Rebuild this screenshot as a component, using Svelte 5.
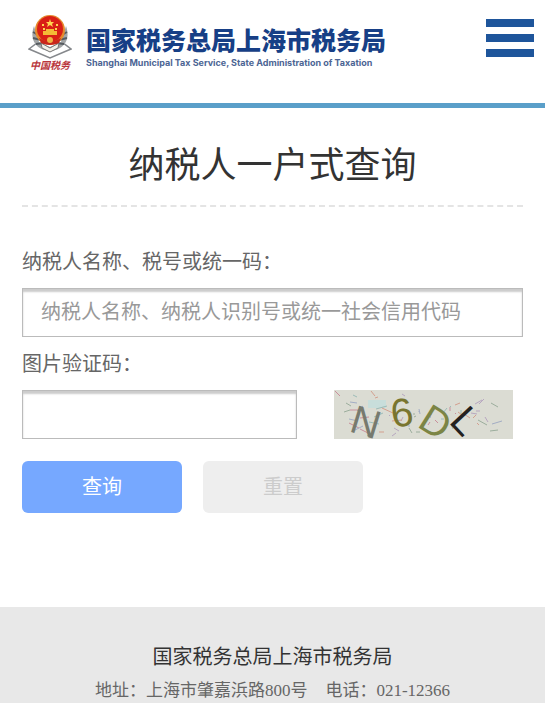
<script>
    let taxpayer = $state('');
    let code = $state('');

    const captcha = [
        { char: 'N', x: 14, y: 41, angle: 17, color: '#777a6e' },
        { char: '6', x: 59, y: 38, angle: -9, color: '#78752f' },
        { char: 'D', x: 82, y: 36, angle: 32, color: '#7c8545' },
        { char: 'L', x: 114, y: 32, angle: 47, color: '#24221f' }
    ];

    const colors = ['#c98f9b', '#a3adc4', '#9cae9d', '#b7a7c0', '#d3a08f', '#9cbcb8'];
    const noise = Array.from({ length: 60 }, (_, i) => {
        const x = 6 + (i * 67 + (i * i) % 23) % 160;
        const y = 6 + (i * 29 + (i * i) % 17) % 38;
        return {
            x,
            y,
            x2: x + ((i * 7) % 17) - 5,
            y2: y + ((i * 5) % 11) - 5,
            color: colors[i % colors.length]
        };
    });

    function reset() {
        taxpayer = '';
        code = '';
    }
</script>

<header>
    <a class="brand" href="/" aria-label="国家税务总局上海市税务局">
        <span class="emblem">
            <svg viewBox="0 0 44 44" width="44" height="44" aria-hidden="true">
                <path d="M1 34 L9 28 L22 36 L35 28 L43 34 L22 43 Z" fill="#fff" stroke="#85888c" stroke-width="1.5"/>
                <path d="M6 11 C1 25 8 34 21 36 L23 36 C36 34 43 25 38 11 L33 27 L22 32 L11 27 Z" fill="#a2a5a6"/>
                <path d="M5 17 L12 21 M5 23 L13 25 M8 29 L16 28 M39 17 L32 21 M39 23 L31 25 M36 29 L28 28" stroke="#555b60" stroke-width="2"/>
                <path d="M13 28 L22 33 L31 28 L30 33 L22 37 L14 33 Z" fill="#f3f1e8" stroke="#777" stroke-width="1"/>
                <circle cx="22" cy="15" r="15" fill="#e58a2c"/>
                <circle cx="22" cy="14" r="13" fill="#d91f16"/>
                <path d="M22 4 L23 7 L26 7 L24 9 L25 12 L22 10 L19 12 L20 9 L18 7 L21 7 Z" fill="#ffd550"/>
                <path d="M15 20 V16 H18 V14 H26 V16 H29 V20 Z" fill="#f4ba36"/>
                <path d="M14 10 h2 M28 10 h2 M15 14 h2 M27 14 h2" stroke="#ffd550" stroke-width="2"/>
                <path d="M11 23 Q22 30 33 23 L31 28 Q22 32 13 28 Z" fill="#c9261b"/>
                <circle cx="22" cy="25" r="3" fill="#f0b343"/>
            </svg>
            <span class="slogan">中国税务</span>
        </span>
        <span class="names">
            <strong>国家税务总局上海市税务局</strong>
            <span class="english">Shanghai Municipal Tax Service, State Administration of Taxation</span>
        </span>
    </a>
    <button class="menu" type="button" aria-label="菜单">
        <span></span>
        <span></span>
        <span></span>
    </button>
</header>

<main>
    <h1>纳税人一户式查询</h1>
    <form onsubmit={(e) => e.preventDefault()}>
        <label for="taxpayer">纳税人名称、税号或统一码：</label>
        <input id="taxpayer" type="text" placeholder="纳税人名称、纳税人识别号或统一社会信用代码" bind:value={taxpayer}>

        <label for="code">图片验证码：</label>
        <div class="row">
            <input id="code" type="text" autocomplete="off" bind:value={code}>
            <svg class="captcha" viewBox="0 0 179 49" role="img" aria-label="验证码">
                <rect width="179" height="49" fill="#dbdcd3"/>
                <rect x="34" y="10" width="18" height="8" fill="#c8dedb"/>
                {#each noise as line}
                    <line x1={line.x} y1={line.y} x2={line.x2} y2={line.y2} stroke={line.color}/>
                {/each}
                {#each captcha as item}
                    <text x={item.x} y={item.y} fill={item.color} transform="rotate({item.angle} {item.x} {item.y})">{item.char}</text>
                {/each}
            </svg>
        </div>

        <div class="buttons">
            <button class="query" type="submit">查询</button>
            <button class="reset" type="button" onclick={reset}>重置</button>
        </div>
    </form>
</main>

<footer>
    <p class="office">国家税务总局上海市税务局</p>
    <p class="contact"><span>地址：上海市肇嘉浜路800号</span><span>电话：021-12366</span></p>
</footer>

<style>
    :global(body) {
        background: #fff;
        color: #666;
        font-family: "Noto Sans CJK SC", sans-serif;
    }

    header {
        display: flex;
        justify-content: space-between;
        align-items: flex-start;
        padding: 15px 11px 30px 28px;
        border-bottom: 5px solid #5a9fc9;
    }

    .brand {
        display: flex;
        gap: 14px;
        color: #173f86;
        text-decoration: none;
    }

    .emblem {
        display: flex;
        flex-direction: column;
        align-items: center;
    }

    .slogan {
        color: #b9353b;
        font: italic bold 10px/14px "Liberation Serif", "Noto Sans CJK SC", serif;
    }

    .names {
        display: flex;
        flex-direction: column;
        gap: 2px;
        padding-top: 8px;
        white-space: nowrap;
    }

    .names strong {
        font-size: 25px;
        line-height: 32px;
        font-weight: 900;
    }

    .english {
        font: 700 9px/12px Inter, sans-serif;
        color: #4c6594;
    }

    .menu {
        display: flex;
        flex-direction: column;
        gap: 7px;
        width: 48px;
        margin-top: 4px;
        padding: 0;
        border: 0;
        background: none;
        cursor: pointer;
    }

    .menu span {
        width: 100%;
        height: 8px;
        background: #1e559b;
    }

    main {
        padding: 0 22px 94px;
    }

    h1 {
        margin: 0 0 39px;
        padding: 28px 0 17px;
        border-bottom: 2px dashed #e4e4e4;
        color: #333;
        font-size: 36px;
        line-height: 52px;
        font-weight: 400;
        text-align: center;
    }

    label {
        display: block;
        margin-bottom: 12px;
        font-size: 20px;
        line-height: 30px;
    }

    input {
        display: block;
        width: 100%;
        height: 49px;
        box-sizing: border-box;
        padding: 0 18px 4px;
        border: 1px solid #bbb;
        border-radius: 0;
        outline: none;
        background: #fff;
        box-shadow: inset 0 3px 2px #ccc;
        color: #666;
        font: 20px "Noto Sans CJK SC", sans-serif;
    }

    input::placeholder {
        color: #999;
    }

    #taxpayer {
        margin-bottom: 11px;
    }

    .row {
        display: flex;
        align-items: center;
        justify-content: space-between;
        padding-right: 10px;
    }

    .row input {
        width: 56%;
    }

    .captcha {
        width: 179px;
        height: 49px;
        overflow: visible;
    }

    .captcha text {
        font: 40px "Liberation Sans", sans-serif;
    }

    .buttons {
        display: flex;
        gap: 21px;
        margin-top: 22px;
    }

    .buttons button {
        width: 160px;
        height: 52px;
        padding: 0 0 4px;
        border: 0;
        border-radius: 6px;
        font: 20px "Noto Sans CJK SC", sans-serif;
        cursor: pointer;
    }

    .query {
        background: #76a8ff;
        color: #fff;
    }

    .reset {
        background: #eee;
        color: #ccc;
    }

    footer {
        padding-top: 34px;
        background: #e8e8e8;
        text-align: center;
    }

    p {
        margin: 0;
    }

    .office {
        color: #333;
        font-size: 20px;
        line-height: 30px;
    }

    .contact {
        display: flex;
        justify-content: center;
        gap: 18px;
        padding-top: 8px;
        font: 17px/24px "Liberation Serif", "Noto Sans CJK SC", serif;
    }
</style>
